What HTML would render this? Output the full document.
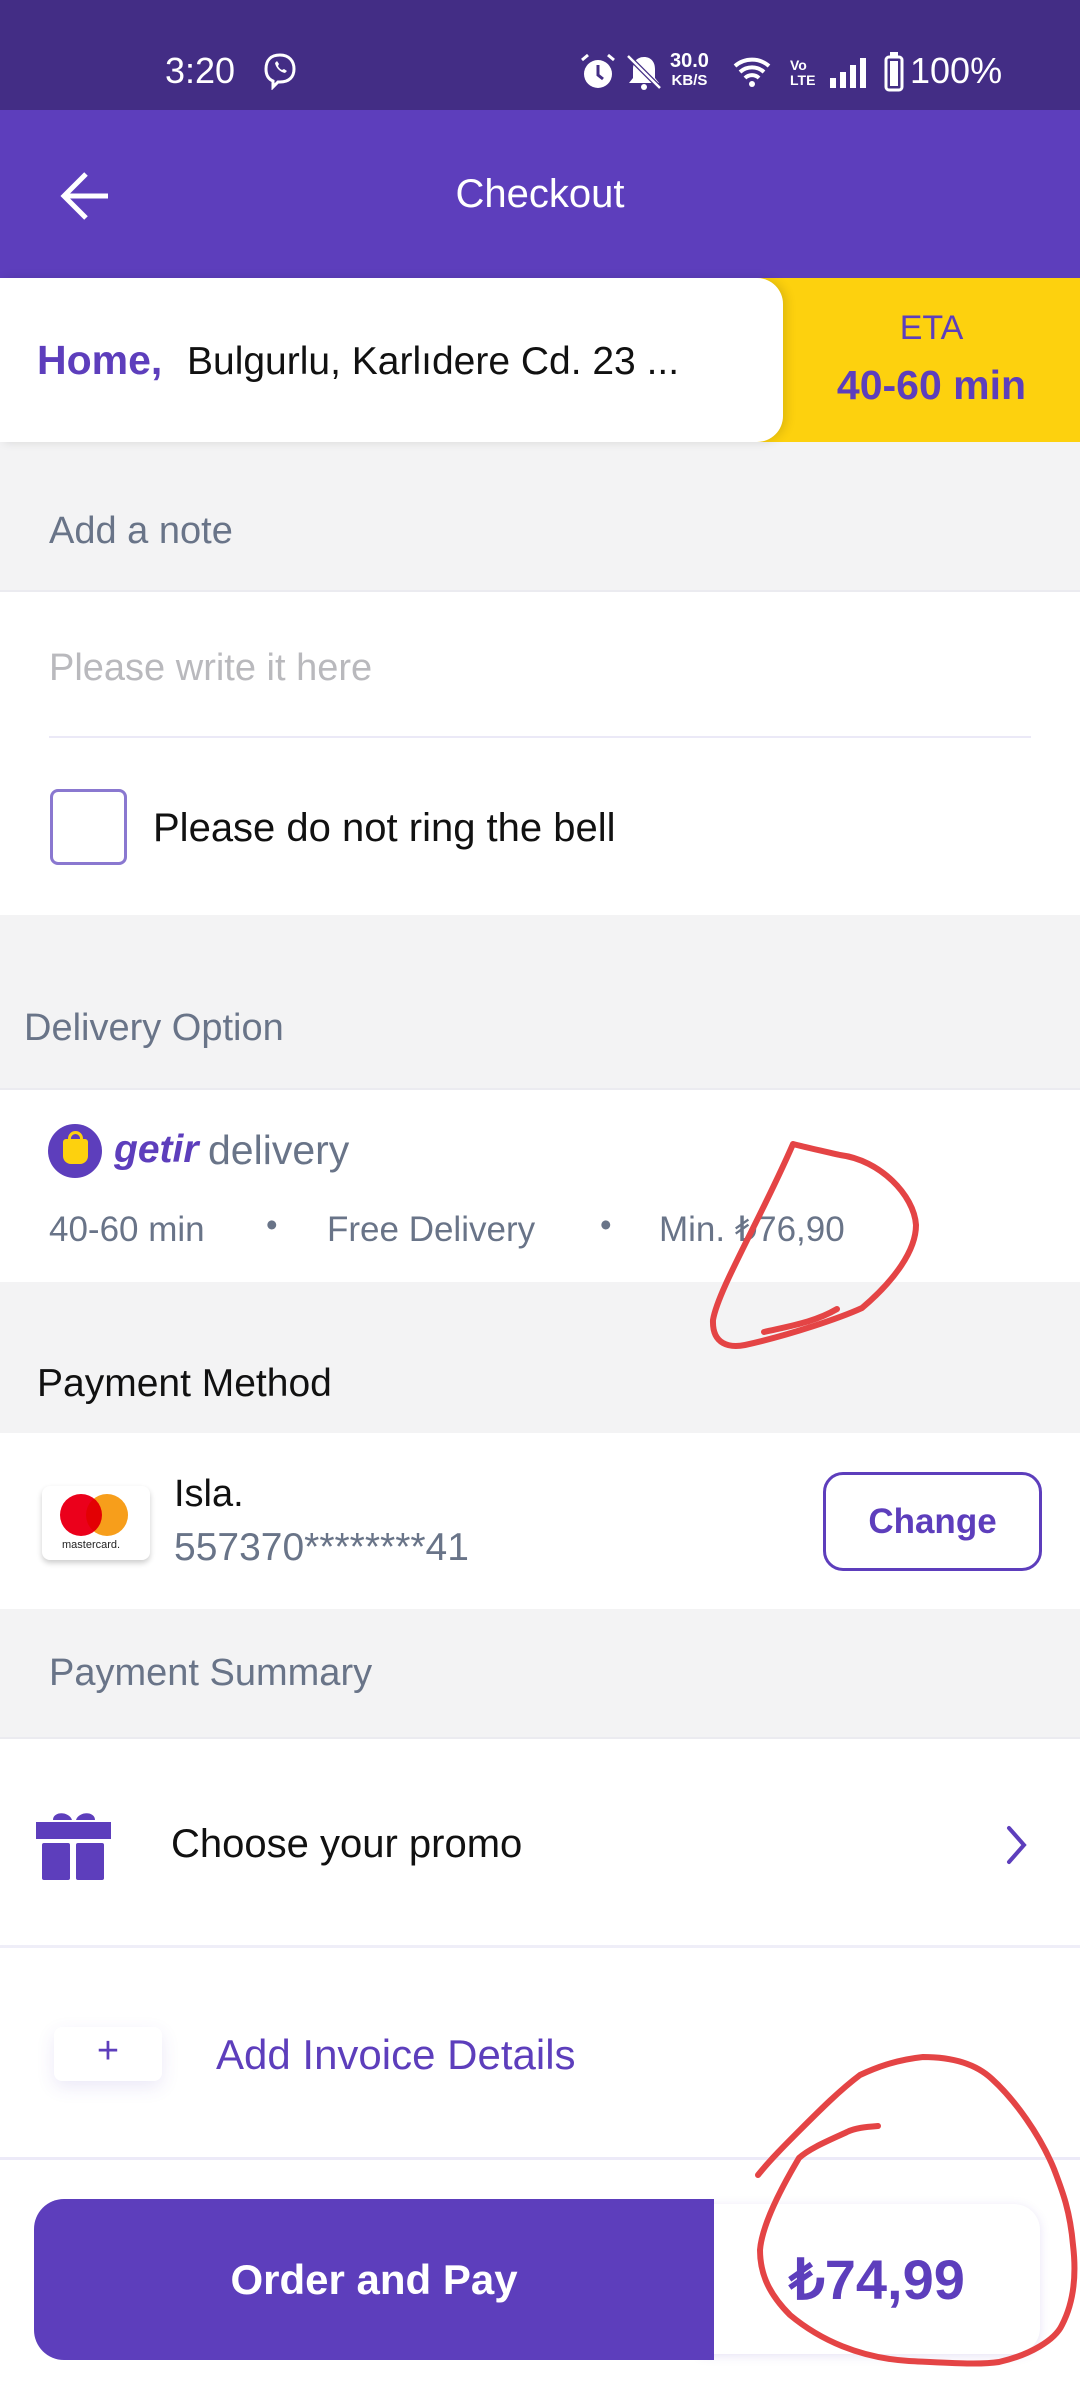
<!DOCTYPE html>
<html><head><meta charset="utf-8"><style>
*{margin:0;padding:0;box-sizing:border-box}
body{width:1080px;height:2400px;position:relative;background:#f3f3f4;font-family:"Liberation Sans",sans-serif;overflow:hidden}
.a{position:absolute}
.t{position:absolute;white-space:nowrap;line-height:1}
.w{position:absolute;left:0;width:1080px;background:#fff}
</style></head><body>
<div class="a" style="left:0;top:0;width:1080px;height:110px;background:#432d85"></div>
<div class="t" style="left:165px;top:53px;font-size:36px;color:#fff">3:20</div>
<svg class="a" style="left:262px;top:52px" width="36" height="38" viewBox="0 0 36 38"><path d="M18 3C9 3 4 8 4 17c0 6 2 10 7 12v6l5-5h2c9 0 14-5 14-13S27 3 18 3z" fill="none" stroke="#fff" stroke-width="3"/><path d="M13 11c1 5 5 9 10 10l2-2-3-2-2 1c-2-1-3-2-4-4l1-2-2-3z" fill="#fff"/></svg>
<svg class="a" style="left:578px;top:52px" width="40" height="40" viewBox="0 0 40 40"><circle cx="20" cy="22" r="14" fill="#fff"/><path d="M20 13v10l5 4" stroke="#432d85" stroke-width="3" fill="none"/><path d="M4 8l6-5M36 8l-6-5" stroke="#fff" stroke-width="3"/></svg>
<svg class="a" style="left:624px;top:52px" width="40" height="40" viewBox="0 0 40 40"><path d="M20 5c-7 0-11 5-11 12v9l-4 5h30l-4-5v-9c0-7-4-12-11-12z" fill="#fff"/><circle cx="20" cy="35" r="3" fill="#fff"/><path d="M4 4l32 32" stroke="#432d85" stroke-width="5"/><path d="M4 4l32 32" stroke="#fff" stroke-width="2.5"/></svg>
<div class="t" style="left:670px;top:52px;font-size:20px;color:#fff;font-weight:bold;text-align:center;line-height:18px">30.0<br><span style="font-size:15px">KB/S</span></div>
<svg class="a" style="left:733px;top:56px" width="40" height="32" viewBox="0 0 40 32"><path d="M2 10a26 26 0 0 1 34 0M7 16a18 18 0 0 1 24 0M12 22a10 10 0 0 1 14 0" stroke="#fff" stroke-width="4" fill="none"/><circle cx="19" cy="28" r="3" fill="#fff"/></svg>
<div class="t" style="left:790px;top:58px;font-size:14px;color:#fff;line-height:15px;font-weight:bold">Vo<br>LTE</div>
<svg class="a" style="left:830px;top:56px" width="44" height="34"><rect x="0" y="22" width="6" height="10" fill="#fff"/><rect x="10" y="16" width="6" height="16" fill="#fff"/><rect x="20" y="9" width="6" height="23" fill="#fff"/><rect x="30" y="2" width="6" height="30" fill="#fff"/></svg>
<svg class="a" style="left:884px;top:52px" width="20" height="40"><rect x="2" y="5" width="16" height="33" rx="3" fill="none" stroke="#fff" stroke-width="3"/><rect x="6" y="0" width="8" height="5" fill="#fff"/><rect x="6" y="9" width="8" height="25" fill="#fff"/></svg>
<div class="t" style="left:910px;top:53px;font-size:36px;color:#fff">100%</div>

<div class="a" style="left:0;top:110px;width:1080px;height:168px;background:#5d3ebc"></div>
<svg class="a" style="left:58px;top:170px" width="54" height="52" viewBox="0 0 54 52"><path d="M28 4L6 26l22 22M6 26h44" stroke="#fff" stroke-width="5" fill="none"/></svg>
<div class="t" style="left:0;width:1080px;text-align:center;top:174px;font-size:40px;color:#fff">Checkout</div>

<div class="a" style="left:700px;top:278px;width:380px;height:164px;background:#fdd10e"></div>
<div class="a" style="left:0;top:278px;width:783px;height:164px;background:#fff;border-radius:0 26px 26px 0;box-shadow:4px 0 10px rgba(0,0,0,.12)"></div>
<div class="t" style="left:37px;top:340px;font-size:41px;color:#5d3ebc;font-weight:bold">Home,</div>
<div class="t" style="left:187px;top:342px;font-size:39px;color:#111">Bulgurlu, Karlıdere Cd. 23 ...</div>
<div class="t" style="left:783px;width:297px;text-align:center;top:311px;font-size:34px;color:#5d3ebc">ETA</div>
<div class="t" style="left:783px;width:297px;text-align:center;top:365px;font-size:41px;color:#5d3ebc;font-weight:bold">40-60 min</div>

<div class="t" style="left:49px;top:512px;font-size:38px;color:#697488">Add a note</div>
<div class="w" style="top:590px;height:325px;border-top:2px solid #ebebf0"></div>
<div class="t" style="left:49px;top:649px;font-size:38px;color:#b9b9bd">Please write it here</div>
<div class="a" style="left:49px;top:736px;width:982px;height:2px;background:#ebe9f7"></div>
<div class="a" style="left:50px;top:789px;width:77px;height:76px;border:3px solid #8a78d0;border-radius:8px"></div>
<div class="t" style="left:153px;top:808px;font-size:40px;color:#111">Please do not ring the bell</div>

<div class="t" style="left:24px;top:1009px;font-size:38px;color:#697488">Delivery Option</div>
<div class="w" style="top:1088px;height:194px;border-top:2px solid #ebebf0"></div>
<div class="a" style="left:48px;top:1124px;width:54px;height:54px;border-radius:50%;background:#5d3ebc"></div>
<div class="a" style="left:63px;top:1139px;width:25px;height:25px;background:#fdd10e;border-radius:3px 3px 8px 8px"></div>
<div class="a" style="left:68px;top:1131px;width:15px;height:14px;border:3px solid #fdd10e;border-bottom:none;border-radius:8px 8px 0 0"></div>
<div class="t" style="left:114px;top:1130px;font-size:39px;color:#5d3ebc;font-weight:bold;font-style:italic">getir</div>
<div class="t" style="left:208px;top:1130px;font-size:41px;color:#697488">delivery</div>
<div class="t" style="left:49px;top:1212px;font-size:35px;color:#697488">40-60 min</div>
<div class="t" style="left:266px;top:1208px;font-size:33px;color:#697488">•</div>
<div class="t" style="left:327px;top:1212px;font-size:35px;color:#697488">Free Delivery</div>
<div class="t" style="left:600px;top:1208px;font-size:33px;color:#697488">•</div>
<div class="t" style="left:659px;top:1212px;font-size:35px;color:#697488">Min. ₺76,90</div>

<div class="t" style="left:37px;top:1364px;font-size:39px;color:#111">Payment Method</div>
<div class="w" style="top:1433px;height:176px"></div>
<div class="a" style="left:42px;top:1486px;width:108px;height:74px;background:#fff;border-radius:8px;box-shadow:0 3px 6px rgba(0,0,0,.2)"></div>
<div class="a" style="left:60px;top:1494px;width:42px;height:42px;border-radius:50%;background:#eb001b"></div>
<div class="a" style="left:86px;top:1494px;width:42px;height:42px;border-radius:50%;background:#f79e1b;mix-blend-mode:multiply"></div>
<div class="t" style="left:62px;top:1540px;font-size:11px;color:#222">mastercard.</div>
<div class="t" style="left:174px;top:1475px;font-size:38px;color:#111">Isla.</div>
<div class="t" style="left:174px;top:1528px;font-size:39px;color:#697488">557370********41</div>
<div class="a" style="left:823px;top:1472px;width:219px;height:99px;border:3px solid #5d3ebc;border-radius:20px"></div>
<div class="t" style="left:823px;width:219px;text-align:center;top:1504px;font-size:35px;color:#5d3ebc;font-weight:bold">Change</div>

<div class="t" style="left:49px;top:1654px;font-size:38px;color:#697488">Payment Summary</div>
<div class="w" style="top:1737px;height:420px;border-top:2px solid #ebebf0"></div>
<svg class="a" style="left:36px;top:1806px" width="76" height="76" viewBox="0 0 76 76"><path d="M17 14c0-9 16-9 19 0M40 14c3-9 19-9 19 0" fill="#5d3ebc"/><rect x="0" y="16" width="75" height="17" fill="#5d3ebc"/><rect x="6" y="37" width="28" height="37" rx="2" fill="#5d3ebc"/><rect x="40" y="37" width="28" height="37" rx="2" fill="#5d3ebc"/></svg>
<div class="t" style="left:171px;top:1824px;font-size:40px;color:#111">Choose your promo</div>
<svg class="a" style="left:1004px;top:1824px" width="26" height="42"><path d="M5 4l15 17L5 38" stroke="#5d3ebc" stroke-width="4" fill="none" stroke-linecap="round"/></svg>
<div class="a" style="left:0;top:1945px;width:1080px;height:3px;background:#efeef8"></div>
<div class="a" style="left:54px;top:2027px;width:108px;height:54px;background:#fff;border-radius:8px;box-shadow:0 6px 18px rgba(93,62,188,.12)"></div>
<div class="t" style="left:54px;width:108px;text-align:center;top:2032px;font-size:38px;color:#5d3ebc">+</div>
<div class="t" style="left:216px;top:2034px;font-size:42px;color:#5d3ebc">Add Invoice Details</div>
<div class="a" style="left:0;top:2157px;width:1080px;height:243px;background:#fff;border-top:3px solid #eceaf8"></div>
<div class="a" style="left:700px;top:2204px;width:340px;height:150px;background:#fff;border-radius:0 26px 26px 0;box-shadow:0 2px 10px rgba(93,62,188,.15)"></div>
<div class="a" style="left:34px;top:2199px;width:680px;height:161px;background:#5d3ebc;border-radius:30px 0 0 30px"></div>
<div class="t" style="left:34px;width:680px;text-align:center;top:2259px;font-size:42px;color:#fff;font-weight:bold">Order and Pay</div>
<div class="t" style="left:714px;width:326px;text-align:center;top:2252px;font-size:56px;color:#5d3ebc;font-weight:bold">₺74,99</div>

<svg class="a" style="left:0;top:0" width="1080" height="2400">
<path d="M793 1144C760 1220 718 1290 713 1320C712 1345 730 1348 745 1345C790 1335 840 1318 862 1308C895 1280 916 1250 916 1225C914 1195 880 1160 840 1155C818 1150 800 1146 793 1144M764 1332C790 1326 815 1322 837 1309" stroke="#e44445" stroke-width="6" fill="none" stroke-linecap="round" stroke-linejoin="round"/>
<path d="M878 2126C865 2127 855 2128 847 2132C830 2140 810 2148 799 2158C780 2190 762 2225 760 2250C760 2275 770 2295 790 2315C820 2340 860 2358 909 2361C950 2363 980 2365 999 2362C1030 2355 1055 2340 1062 2325C1075 2300 1076 2270 1073 2245C1070 2210 1062 2190 1054 2169C1040 2135 1015 2100 992 2079C975 2063 950 2057 923 2057C895 2060 875 2068 860 2075C840 2090 820 2110 800 2130C785 2145 770 2160 758 2175" stroke="#e44445" stroke-width="6" fill="none" stroke-linecap="round" stroke-linejoin="round"/>
</svg>
</body></html>
